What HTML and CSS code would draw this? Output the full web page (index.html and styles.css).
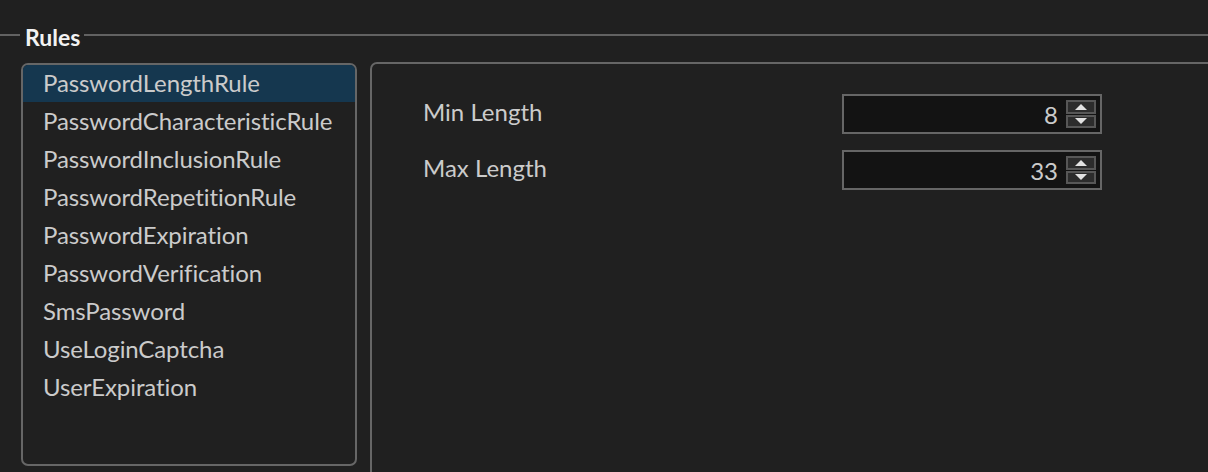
FILE: index.html
```html
<!DOCTYPE html>
<html>
<head>
<meta charset="utf-8">
<link rel="stylesheet" href="styles.css">
</head>
<body>
<div class="group">
  <div class="group-title"><span class="group-label">Rules</span></div>
  <div class="group-body">
    <ul class="rule-list">
      <li class="rule-item selected">PasswordLengthRule</li>
      <li class="rule-item">PasswordCharacteristicRule</li>
      <li class="rule-item">PasswordInclusionRule</li>
      <li class="rule-item">PasswordRepetitionRule</li>
      <li class="rule-item">PasswordExpiration</li>
      <li class="rule-item">PasswordVerification</li>
      <li class="rule-item">SmsPassword</li>
      <li class="rule-item">UseLoginCaptcha</li>
      <li class="rule-item">UserExpiration</li>
    </ul>
    <div class="panel">
      <div class="form">
        <label class="field-label">Min Length</label>
        <div class="spinbox">
          <span class="spin-value">8</span>
          <div class="spin-buttons">
            <span class="spin-btn up"></span>
            <span class="spin-btn down"></span>
          </div>
        </div>
        <label class="field-label">Max Length</label>
        <div class="spinbox">
          <span class="spin-value">33</span>
          <div class="spin-buttons">
            <span class="spin-btn up"></span>
            <span class="spin-btn down"></span>
          </div>
        </div>
      </div>
    </div>
  </div>
</div>
</body>
</html>
```

FILE: styles.css
```css
* { box-sizing: border-box; }
html, body {
  margin: 0;
  padding: 0;
  background: #202020;
  overflow: hidden;
  height: 472px;
}
body {
  font-family: Lato, "Open Sans", sans-serif;
  font-variant-ligatures: none;
  color: #cbcbcb;
}
.group {
  padding-top: 23px;
}
.group-title {
  display: flex;
  align-items: center;
  height: 24px;
}
.group-title::before,
.group-title::after {
  content: "";
  height: 2px;
  background: #626262;
}
.group-title::before { width: 20px; }
.group-title::after { flex: 1; }
.group-label {
  font-weight: bold;
  font-size: 23px;
  color: #f2f2f2;
  padding: 3px 4px 0 5px;
  line-height: 24px;
}
.group-body {
  display: flex;
  gap: 13px;
  padding-left: 21px;
  margin-top: 15px;
}
.rule-list {
  list-style: none;
  margin: 1px 0 0 0;
  padding: 0;
  width: 336px;
  height: 403px;
  border: 2px solid #666;
  border-radius: 7px;
  overflow: hidden;
  flex: none;
}
.rule-item {
  height: 38px;
  line-height: 38px;
  padding-left: 20px;
  font-size: 24px;
  letter-spacing: -0.1px;
  white-space: nowrap;
}
.rule-item.selected {
  background: #15374f;
}
.rule-list .rule-item:first-child {
  margin-top: -1px;
}
.panel {
  flex: 1;
  margin-right: -20px;
  height: 410px;
  border: 2px solid #666;
  border-bottom: none;
  border-radius: 7px 0 0 0;
  padding: 30px 0 0 51px;
}
.form {
  display: grid;
  grid-template-columns: 419px 260px;
  row-gap: 16px;
  align-items: center;
}
.field-label {
  font-size: 24px;
  line-height: 36px;
  margin-top: -5px;
}
.spinbox {
  height: 40px;
  border: 2px solid #666;
  background: #131313;
  display: flex;
  align-items: center;
  justify-content: flex-end;
  padding-right: 4px;
}
.spin-value {
  font-size: 24px;
  margin-right: 8px;
  line-height: 36px;
  padding-top: 2px;
}
.spin-buttons {
  display: flex;
  flex-direction: column;
  gap: 1px;
  width: 30px;
  height: 28px;
}
.spin-btn {
  flex: 1;
  background: #2c2c2c;
  border: 2px solid #575757;
  display: flex;
  align-items: center;
  justify-content: center;
}
.spin-btn::before {
  content: "";
  width: 0;
  height: 0;
  border-left: 6px solid transparent;
  border-right: 6px solid transparent;
}
.spin-btn.up::before { border-bottom: 6px solid #e2e2e2; }
.spin-btn.down::before { border-top: 6px solid #e2e2e2; }
```
